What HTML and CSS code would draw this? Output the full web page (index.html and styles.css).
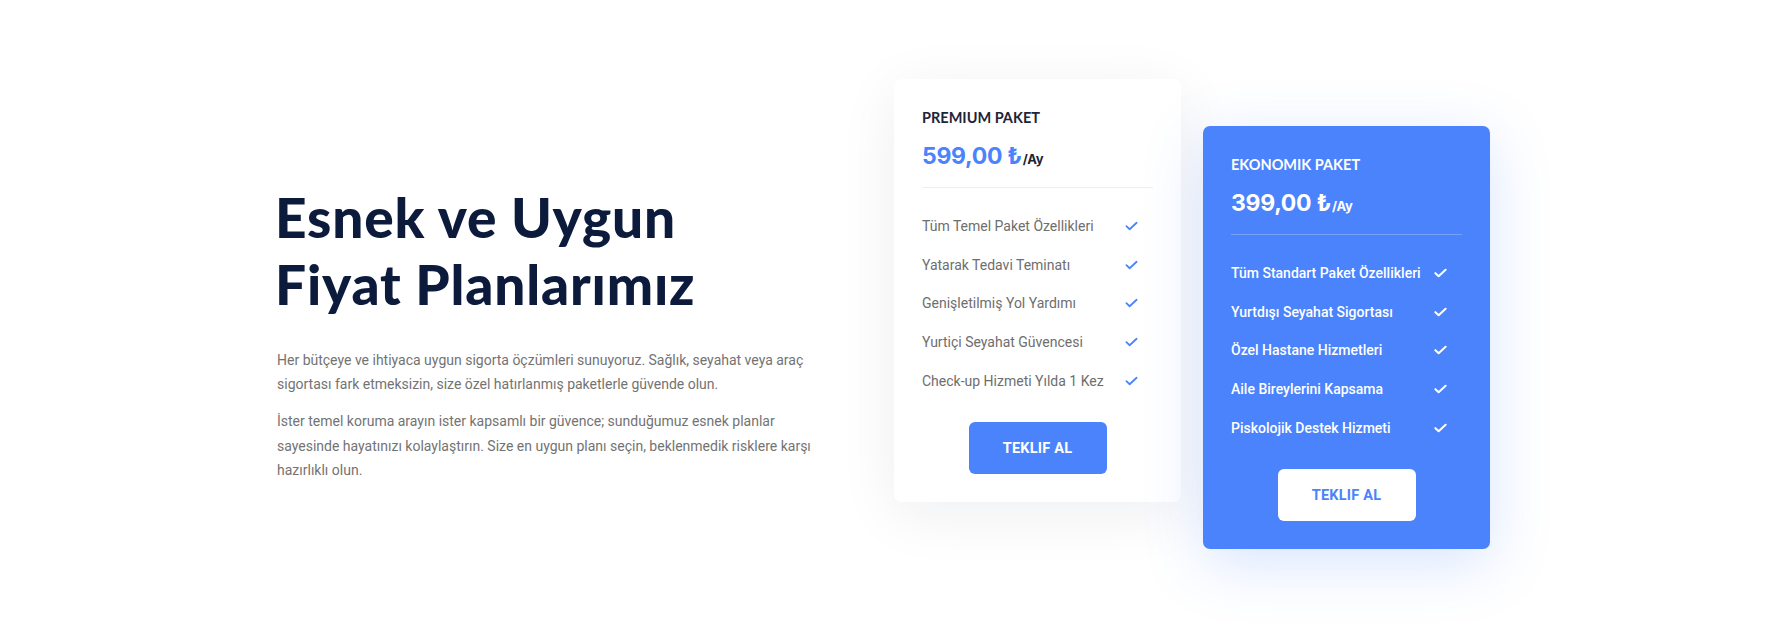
FILE: index.html
```html
<!DOCTYPE html>
<html lang="tr">
<head>
<meta charset="utf-8">
<title>Fiyat Planları</title>
<link rel="stylesheet" href="styles.css">
</head>
<body>
<section class="pricing">
  <div class="intro">
    <h1 class="intro-title">Esnek ve Uygun<br>Fiyat Planlarımız</h1>
    <p class="intro-text">Her bütçeye ve ihtiyaca uygun sigorta öçzümleri sunuyoruz. Sağlık, seyahat veya araç sigortası fark etmeksizin, size özel hatırlanmış paketlerle güvende olun.</p>
    <p class="intro-text">İster temel koruma arayın ister kapsamlı bir güvence; sunduğumuz esnek planlar sayesinde hayatınızı kolaylaştırın. Size en uygun planı seçin, beklenmedik risklere karşı hazırlıklı olun.</p>
  </div>
  <div class="cards">
    <div class="card card-light">
      <div class="card-name">PREMIUM PAKET</div>
      <div class="card-price">599,00 ₺<span class="per">/Ay</span></div>
      <ul class="features">
        <li><span>Tüm Temel Paket Özellikleri</span><svg class="check" viewBox="0 0 14 10"><path d="M1.5 5.2 L5 8.5 L12.5 1.5"/></svg></li>
        <li><span>Yatarak Tedavi Teminatı</span><svg class="check" viewBox="0 0 14 10"><path d="M1.5 5.2 L5 8.5 L12.5 1.5"/></svg></li>
        <li><span>Genişletilmiş Yol Yardımı</span><svg class="check" viewBox="0 0 14 10"><path d="M1.5 5.2 L5 8.5 L12.5 1.5"/></svg></li>
        <li><span>Yurtiçi Seyahat Güvencesi</span><svg class="check" viewBox="0 0 14 10"><path d="M1.5 5.2 L5 8.5 L12.5 1.5"/></svg></li>
        <li><span>Check-up Hizmeti Yılda 1 Kez</span><svg class="check" viewBox="0 0 14 10"><path d="M1.5 5.2 L5 8.5 L12.5 1.5"/></svg></li>
      </ul>
      <a class="btn btn-blue" href="#">TEKLIF AL</a>
    </div>
    <div class="card card-blue">
      <div class="card-name">EKONOMIK PAKET</div>
      <div class="card-price">399,00 ₺<span class="per">/Ay</span></div>
      <ul class="features">
        <li><span>Tüm Standart Paket Özellikleri</span><svg class="check" viewBox="0 0 14 10"><path d="M1.5 5.2 L5 8.5 L12.5 1.5"/></svg></li>
        <li><span>Yurtdışı Seyahat Sigortası</span><svg class="check" viewBox="0 0 14 10"><path d="M1.5 5.2 L5 8.5 L12.5 1.5"/></svg></li>
        <li><span>Özel Hastane Hizmetleri</span><svg class="check" viewBox="0 0 14 10"><path d="M1.5 5.2 L5 8.5 L12.5 1.5"/></svg></li>
        <li><span>Aile Bireylerini Kapsama</span><svg class="check" viewBox="0 0 14 10"><path d="M1.5 5.2 L5 8.5 L12.5 1.5"/></svg></li>
        <li><span>Piskolojik Destek Hizmeti</span><svg class="check" viewBox="0 0 14 10"><path d="M1.5 5.2 L5 8.5 L12.5 1.5"/></svg></li>
      </ul>
      <a class="btn btn-white" href="#">TEKLIF AL</a>
    </div>
  </div>
</section>
</body>
</html>
```
FILE: styles.css
```css
* { box-sizing: border-box; }
html, body { margin: 0; padding: 0; background: #fff; }
body { font-family: Roboto, "Liberation Sans", sans-serif; }

.pricing {
  display: flex;
  align-items: flex-start;
  padding: 79px 0 0 277px;
  height: 638px;
}

.intro {
  width: 540px;
  padding-top: 105px;
  margin-right: 77px;
}
.intro-title {
  margin: 0 0 29.5px -2px;
  font-family: Lato, "Open Sans", sans-serif;
  font-weight: 900;
  font-size: 55px;
  line-height: 67px;
  color: #0c1a3b;
  letter-spacing: 0.8px;
}
.intro-text {
  margin: 0 0 12.5px;
  font-size: 14px;
  line-height: 24.5px;
  color: #737373;
}

.cards {
  display: flex;
  align-items: flex-start;
  gap: 22px;
}
.card {
  width: 287px;
  height: 423px;
  border-radius: 7px;
  padding: 29px 28px 28px;
  display: flex;
  flex-direction: column;
}
.card-light {
  background: #fff;
  box-shadow: 0 12px 60px rgba(20, 30, 60, 0.07);
}
.card-blue {
  margin-top: 47px;
  background: #4a83fb;
  box-shadow: 0 14px 60px rgba(74, 131, 251, 0.22);
  color: #fff;
}

.card-name {
  font-family: Lato, sans-serif;
  font-weight: 700;
  font-size: 14.5px;
  line-height: 20px;
  letter-spacing: 0;
  color: #1e2437;
}
.card-blue .card-name { color: #fff; }

.card-price {
  margin-top: 13px;
  padding-bottom: 13px;
  border-bottom: 1px solid #eeeff2;
  font-family: Inter, sans-serif;
  font-weight: 700;
  font-size: 23px;
  line-height: 30px;
  color: #4a83fb;
  letter-spacing: -0.3px;
}
.card-blue .card-price {
  color: #fff;
  border-bottom-color: rgba(255, 255, 255, 0.25);
}
.per {
  font-size: 13px;
  font-weight: 700;
  color: #1e2437;
  margin-left: 1px;
}
.card-blue .per { color: #fff; }

.features {
  list-style: none;
  margin: 0;
  padding: 26px 0 0;
  display: flex;
  flex-direction: column;
  gap: 14.7px;
}
.features li {
  display: flex;
  align-items: center;
  justify-content: space-between;
  padding-right: 15px;
  font-size: 14px;
  line-height: 24px;
  color: #6e6e6e;
}
.card-blue .features li {
  color: #fff;
  font-weight: 500;
}
.check {
  width: 13px;
  height: 10px;
  fill: none;
  stroke: #4a83fb;
  stroke-width: 1.9;
  stroke-linecap: round;
  stroke-linejoin: round;
}
.card-blue .check { stroke: #fff; stroke-width: 2.2; }

.btn {
  margin: auto auto 0;
  width: 138px;
  height: 52px;
  border-radius: 6px;
  display: flex;
  align-items: center;
  justify-content: center;
  font-weight: 700;
  font-size: 14.5px;
  text-decoration: none;
  letter-spacing: 0.2px;
}
.btn-blue { background: #4a83fb; color: #fff; }
.btn-white { background: #fff; color: #4a83fb; }
```
